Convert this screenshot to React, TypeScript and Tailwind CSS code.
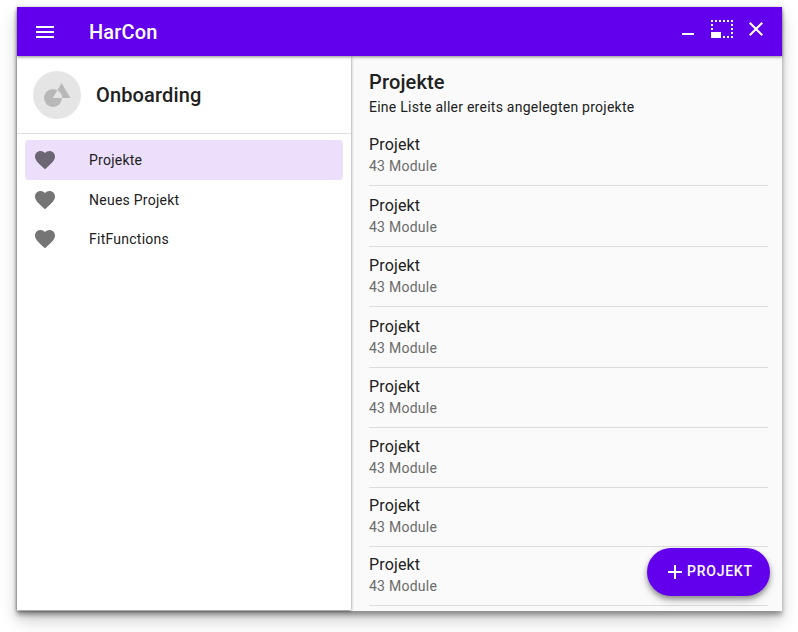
import React from 'react';

const navItems = [
  { label: 'Projekte', row: 'h-10 bg-[#ecdffb]' },
  { label: 'Neues Projekt', row: 'h-10' },
  { label: 'FitFunctions', row: 'h-[38px]' },
];

const rowHeights = ['h-[62px]', 'h-[61px]', 'h-[60px]', 'h-[61px]', 'h-[60px]', 'h-[60px]', 'h-[59px]', 'h-[59px]'];

function Heart() {
  return (
    <svg className="size-6 shrink-0" viewBox="0 0 24 24" fill="#000" fillOpacity="0.54">
      <path d="M12 21.35l-1.45-1.32C5.4 15.36 2 12.28 2 8.5 2 5.42 4.42 3 7.5 3c1.74 0 3.41.81 4.5 2.09C13.09 3.81 14.76 3 16.5 3 19.58 3 22 5.42 22 8.5c0 3.78-3.4 6.86-8.55 11.54L12 21.35z" />
    </svg>
  );
}

function TopBar() {
  return (
    <header className="relative z-20 flex h-[49px] shrink-0 items-center bg-[#6200ee] pl-4 text-white shadow-[0_1px_3px_rgba(0,0,0,0.45)]">
      <svg className="size-6" viewBox="0 0 24 24" fill="currentColor">
        <path d="M3 18h18v-2H3v2zm0-5h18v-2H3v2zm0-7v2h18V6H3z" />
      </svg>
      <h1 className="ml-8 text-[20px] leading-6 font-medium tracking-[0.15px]">HarCon</h1>
      <div className="mr-[19px] mb-[5px] ml-auto flex items-center">
        <svg className="h-5 w-3" viewBox="0 0 12 20" fill="currentColor">
          <path d="M0 14h12v2H0z" />
        </svg>
        <svg className="ml-[17px] h-[18px] w-[22px]" viewBox="0 0 22 18" fill="none" stroke="currentColor" strokeWidth="2">
          <path d="M0 1H22M0 17H22" strokeDasharray="2 2" />
          <path d="M1 0V18M21 0V18" strokeDasharray="2 2" />
          <path d="M0 12h10v6H0z" fill="currentColor" stroke="none" />
        </svg>
        <svg className="ml-[16px] size-[14px]" viewBox="0 0 14 14" fill="currentColor">
          <path d="M14 1.41L12.59 0 7 5.59 1.41 0 0 1.41 5.59 7 0 12.59 1.41 14 7 8.41 12.59 14 14 12.59 8.41 7z" />
        </svg>
      </div>
    </header>
  );
}

function Sidebar() {
  return (
    <aside className="relative z-10 h-[554px] w-[334px] shrink-0 bg-white shadow-[0_1px_3px_rgba(0,0,0,0.5)]">
      <div className="flex h-[78px] items-center border-b border-[#dfdfdf] pl-4">
        <svg className="size-12" viewBox="0 0 48 48">
          <circle cx="24" cy="24" r="24" fill="#e5e5e5" />
          <path d="M28.6 12L37.4 27H19.8z" fill="#b8b8b8" />
          <circle cx="20" cy="27" r="9" fill="#b8b8b8" />
          <path d="M19.8 27L24.4 19.2A9 9 0 0 1 29 27z" fill="#e5e5e5" />
        </svg>
        <h2 className="ml-[15px] text-[20px] leading-6 font-medium tracking-[0.15px]">Onboarding</h2>
      </div>
      <nav className="px-2 pt-[6px]">
        {navItems.map((item) => (
          <div key={item.label} className={`flex items-center rounded pl-2 ${item.row}`}>
            <Heart />
            <span className="ml-8 text-[14px] leading-5 tracking-[0.25px]">{item.label}</span>
          </div>
        ))}
      </nav>
    </aside>
  );
}

export default function App() {
  return (
    <div className="h-[632px] w-[798px] overflow-hidden bg-white pt-[7px] pl-[17px] font-['Roboto',sans-serif] text-[#212121]">
      <div className="flex h-[604px] w-[765px] flex-col bg-[#fafafa] shadow-[0_4px_5px_rgba(0,0,0,0.35),0_9px_16px_rgba(0,0,0,0.2)]">
        <TopBar />
        <div className="flex h-[555px]">
          <Sidebar />
          <main className="relative flex-1 pr-[14px] pl-[18px]">
            <h2 className="pt-[14px] text-[20px] leading-6 font-medium tracking-[0.15px]">Projekte</h2>
            <p className="mt-[3px] text-[14px] leading-5 tracking-[0.25px]">Eine Liste aller ereits angelegten projekte</p>
            <div className="mt-[7px]">
              {rowHeights.map((height, index) => (
                <div key={index} className={`flex flex-col justify-end border-b border-[#dcdcdc] pb-[9px] ${height}`}>
                  <div className="text-[16px] leading-[22px] tracking-[0.15px]">Projekt</div>
                  <div className="text-[14px] leading-5 tracking-[0.25px] text-[#6b6b6b]">43 Module</div>
                </div>
              ))}
            </div>
            <button className="absolute right-3 bottom-[15px] flex h-12 w-[123px] items-center rounded-full bg-[#6200ee] pl-[21px] text-white shadow-[0_3px_5px_rgba(0,0,0,0.35),0_5px_10px_rgba(0,0,0,0.15)]">
              <svg className="size-[14px]" viewBox="0 0 14 14" fill="currentColor">
                <path d="M14 8H8v6H6V8H0V6h6V0h2v6h6z" />
              </svg>
              <span className="mb-px ml-[5px] text-[14px] leading-[15px] font-medium tracking-[0.75px]">PROJEKT</span>
            </button>
          </main>
        </div>
      </div>
    </div>
  );
}
